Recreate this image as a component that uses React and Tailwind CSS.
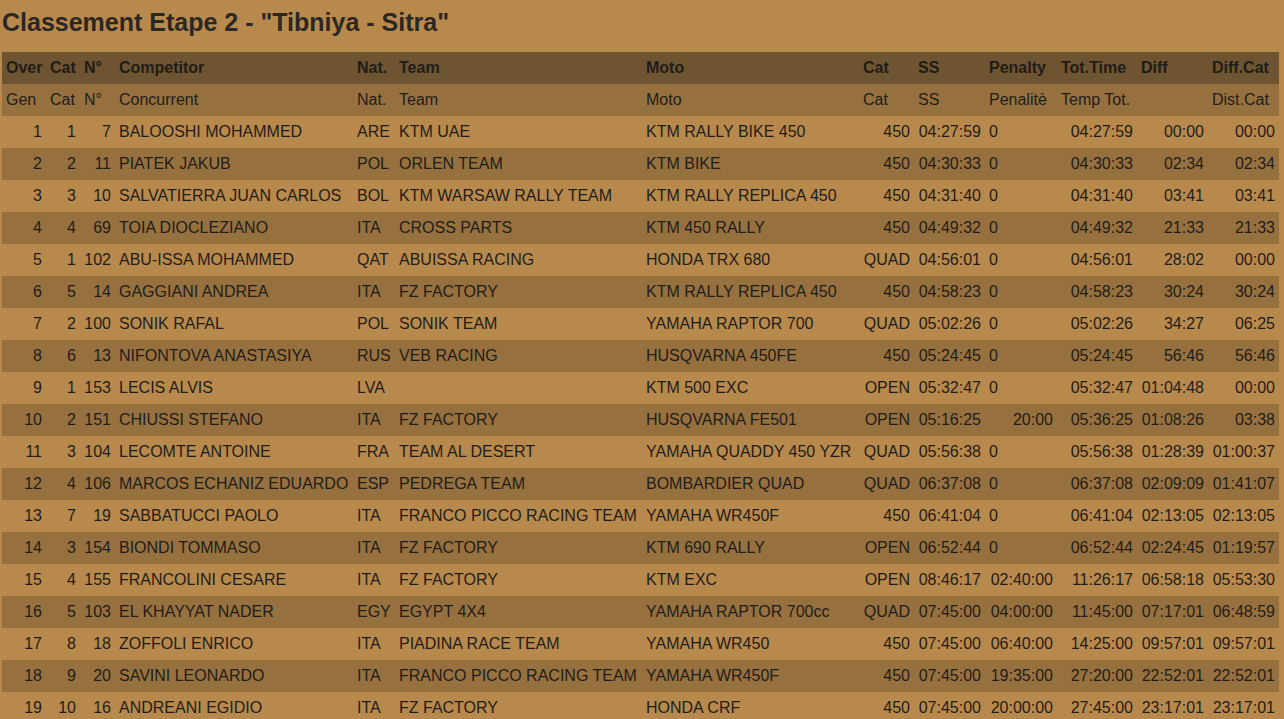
const COLS = [
  { w: 'w-[44px]', h1: 'Over', h2: 'Gen', right: true },
  { w: 'w-[34px]', h1: 'Cat', h2: 'Cat', right: true },
  { w: 'w-[35px]', h1: 'N°', h2: 'N°', right: true },
  { w: 'w-[238px]', h1: 'Competitor', h2: 'Concurrent' },
  { w: 'w-[42px]', h1: 'Nat.', h2: 'Nat.' },
  { w: 'w-[247px]', h1: 'Team', h2: 'Team' },
  { w: 'w-[217px]', h1: 'Moto', h2: 'Moto' },
  { w: 'w-[55px]', h1: 'Cat', h2: 'Cat', right: true },
  { w: 'w-[71px]', h1: 'SS', h2: 'SS', right: true },
  { w: 'w-[72px]', h1: 'Penalty', h2: 'Penalitè', right: true },
  { w: 'w-[80px]', h1: 'Tot.Time', h2: 'Temp Tot.', right: true },
  { w: 'w-[71px]', h1: 'Diff', h2: '', right: true },
  { w: 'w-[71px]', h1: 'Diff.Cat', h2: 'Dist.Cat', right: true },
]

const ROWS = [
  ['1', '1', '7', 'BALOOSHI MOHAMMED', 'ARE', 'KTM UAE', 'KTM RALLY BIKE 450', '450', '04:27:59', '0', '04:27:59', '00:00', '00:00'],
  ['2', '2', '11', 'PIATEK JAKUB', 'POL', 'ORLEN TEAM', 'KTM BIKE', '450', '04:30:33', '0', '04:30:33', '02:34', '02:34'],
  ['3', '3', '10', 'SALVATIERRA JUAN CARLOS', 'BOL', 'KTM WARSAW RALLY TEAM', 'KTM RALLY REPLICA 450', '450', '04:31:40', '0', '04:31:40', '03:41', '03:41'],
  ['4', '4', '69', 'TOIA DIOCLEZIANO', 'ITA', 'CROSS PARTS', 'KTM 450 RALLY', '450', '04:49:32', '0', '04:49:32', '21:33', '21:33'],
  ['5', '1', '102', 'ABU-ISSA MOHAMMED', 'QAT', 'ABUISSA RACING', 'HONDA TRX 680', 'QUAD', '04:56:01', '0', '04:56:01', '28:02', '00:00'],
  ['6', '5', '14', 'GAGGIANI ANDREA', 'ITA', 'FZ FACTORY', 'KTM RALLY REPLICA 450', '450', '04:58:23', '0', '04:58:23', '30:24', '30:24'],
  ['7', '2', '100', 'SONIK RAFAL', 'POL', 'SONIK TEAM', 'YAMAHA RAPTOR 700', 'QUAD', '05:02:26', '0', '05:02:26', '34:27', '06:25'],
  ['8', '6', '13', 'NIFONTOVA ANASTASIYA', 'RUS', 'VEB RACING', 'HUSQVARNA 450FE', '450', '05:24:45', '0', '05:24:45', '56:46', '56:46'],
  ['9', '1', '153', 'LECIS ALVIS', 'LVA', '', 'KTM 500 EXC', 'OPEN', '05:32:47', '0', '05:32:47', '01:04:48', '00:00'],
  ['10', '2', '151', 'CHIUSSI STEFANO', 'ITA', 'FZ FACTORY', 'HUSQVARNA FE501', 'OPEN', '05:16:25', '20:00', '05:36:25', '01:08:26', '03:38'],
  ['11', '3', '104', 'LECOMTE ANTOINE', 'FRA', 'TEAM AL DESERT', 'YAMAHA QUADDY 450 YZR', 'QUAD', '05:56:38', '0', '05:56:38', '01:28:39', '01:00:37'],
  ['12', '4', '106', 'MARCOS ECHANIZ EDUARDO', 'ESP', 'PEDREGA TEAM', 'BOMBARDIER QUAD', 'QUAD', '06:37:08', '0', '06:37:08', '02:09:09', '01:41:07'],
  ['13', '7', '19', 'SABBATUCCI PAOLO', 'ITA', 'FRANCO PICCO RACING TEAM', 'YAMAHA WR450F', '450', '06:41:04', '0', '06:41:04', '02:13:05', '02:13:05'],
  ['14', '3', '154', 'BIONDI TOMMASO', 'ITA', 'FZ FACTORY', 'KTM 690 RALLY', 'OPEN', '06:52:44', '0', '06:52:44', '02:24:45', '01:19:57'],
  ['15', '4', '155', 'FRANCOLINI CESARE', 'ITA', 'FZ FACTORY', 'KTM EXC', 'OPEN', '08:46:17', '02:40:00', '11:26:17', '06:58:18', '05:53:30'],
  ['16', '5', '103', 'EL KHAYYAT NADER', 'EGY', 'EGYPT 4X4', 'YAMAHA RAPTOR 700cc', 'QUAD', '07:45:00', '04:00:00', '11:45:00', '07:17:01', '06:48:59'],
  ['17', '8', '18', 'ZOFFOLI ENRICO', 'ITA', 'PIADINA RACE TEAM', 'YAMAHA WR450', '450', '07:45:00', '06:40:00', '14:25:00', '09:57:01', '09:57:01'],
  ['18', '9', '20', 'SAVINI LEONARDO', 'ITA', 'FRANCO PICCO RACING TEAM', 'YAMAHA WR450F', '450', '07:45:00', '19:35:00', '27:20:00', '22:52:01', '22:52:01'],
  ['19', '10', '16', 'ANDREANI EGIDIO', 'ITA', 'FZ FACTORY', 'HONDA CRF', '450', '07:45:00', '20:00:00', '27:45:00', '23:17:01', '23:17:01'],
]

export default function App() {
  return (
    <div className="min-h-screen bg-[#b8894c] pl-[2px] text-[#1f1d1a] font-['Liberation_Sans',Arial,sans-serif]">
      <h1 className="pt-[8px] pb-[16px] text-[25px] leading-[28px] font-bold text-[#2b2824]">
        Classement Etape 2 - "Tibniya - Sitra"
      </h1>
      <table className="table-fixed border-collapse w-[1277px] text-[16px] leading-[18px]">
        <colgroup>
          {COLS.map((c, i) => <col key={i} className={c.w} />)}
        </colgroup>
        <thead>
          <tr className="h-8 bg-[#6e5430] font-bold">
            {COLS.map((c, i) => (
              <th key={i} className="px-1 text-left whitespace-nowrap">{c.h1}</th>
            ))}
          </tr>
          <tr className="h-8 bg-[#96713f]">
            {COLS.map((c, i) => (
              <td key={i} className="px-1 text-left whitespace-nowrap">{c.h2}</td>
            ))}
          </tr>
        </thead>
        <tbody>
          {ROWS.map((r, ri) => (
            <tr key={ri} className={ri % 2 ? 'h-8 bg-[#96713f]' : 'h-8 bg-[#b8894c]'}>
              {r.map((v, ci) => {
                const right = COLS[ci].right && !(ci === 9 && v === '0')
                return (
                  <td key={ci} className={right ? 'px-1 text-right whitespace-nowrap' : 'px-1 text-left whitespace-nowrap'}>
                    {v}
                  </td>
                )
              })}
            </tr>
          ))}
        </tbody>
      </table>
    </div>
  )
}
